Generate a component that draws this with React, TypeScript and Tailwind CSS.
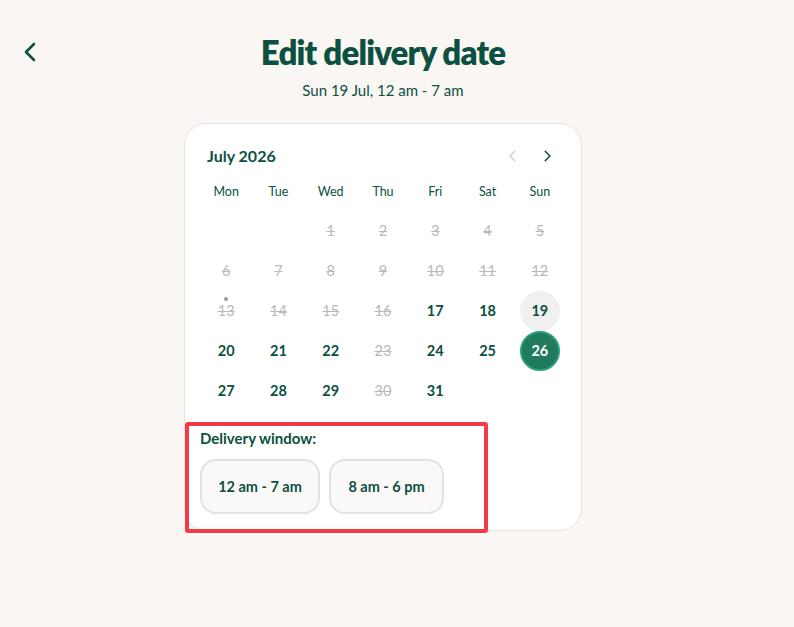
import React from "react";

const G = "#0b5040";

type Day = { n: number; off?: boolean; dot?: boolean; today?: boolean; sel?: boolean } | null;

const weeks: Day[][] = [
  [null, null, { n: 1, off: true }, { n: 2, off: true }, { n: 3, off: true }, { n: 4, off: true }, { n: 5, off: true }],
  [{ n: 6, off: true }, { n: 7, off: true }, { n: 8, off: true }, { n: 9, off: true }, { n: 10, off: true }, { n: 11, off: true }, { n: 12, off: true }],
  [{ n: 13, off: true, dot: true }, { n: 14, off: true }, { n: 15, off: true }, { n: 16, off: true }, { n: 17 }, { n: 18 }, { n: 19, today: true }],
  [{ n: 20 }, { n: 21 }, { n: 22 }, { n: 23, off: true }, { n: 24 }, { n: 25 }, { n: 26, sel: true }],
  [{ n: 27 }, { n: 28 }, { n: 29 }, { n: 30, off: true }, { n: 31 }, null, null],
];

function Chevron({ dir, color, size = 14 }: { dir: "l" | "r"; color: string; size?: number }) {
  return (
    <svg width={size} height={size} viewBox="0 0 24 24" fill="none" stroke={color} strokeWidth={2.6} strokeLinecap="round" strokeLinejoin="round">
      {dir === "l" ? <path d="M15 4 L7 12 L15 20" /> : <path d="M9 4 L17 12 L9 20" />}
    </svg>
  );
}

export default function App() {
  return (
    <div className="min-h-[627px] w-[794px] bg-[#f9f6f3] text-[#0b5040]" style={{ fontFamily: "Lato, 'Noto Sans', sans-serif" }}>
      <div className="relative w-[766px] pt-[31px]">
        <div className="absolute left-[19px] top-[40px]">
          <Chevron dir="l" color={G} size={24} />
        </div>
        <h1 className="text-center text-[33px] font-extrabold leading-[42px] tracking-[-0.8px] text-[#0b5040]">Edit delivery date</h1>
        <p className="mt-[7px] text-center text-[15px] leading-[20px] text-[#0b5040]">Sun 19 Jul, 12 am - 7 am</p>
        <div className="relative mx-auto mt-[23px] w-[398px] rounded-[22px] border border-[#e6e3e0] bg-white px-[15px] pb-[16px] pt-[17px]">
          <div className="flex h-[30px] items-center justify-between pl-[7px] pr-[12px]">
            <span className="text-[16px] font-bold">July 2026</span>
            <div className="flex items-center gap-[20px]">
              <Chevron dir="l" color="#cfd3d1" size={14} />
              <Chevron dir="r" color={G} size={14} />
            </div>
          </div>
          <div className="mt-[9px] grid grid-cols-7">
            {["Mon", "Tue", "Wed", "Thu", "Fri", "Sat", "Sun"].map((d) => (
              <div key={d} className="flex h-[24px] items-center justify-center text-[12.5px]">{d}</div>
            ))}
          </div>
          <div className="mt-[7px] grid grid-cols-7">
            {weeks.flat().map((d, i) => (
              <div key={i} className="flex h-[40px] items-center justify-center">
                {d && (
                  <div
                    className={
                      "relative flex h-[40px] w-[40px] items-center justify-center rounded-full text-[14.5px] " +
                      (d.sel
                        ? "border-2 border-[#2aa07c] bg-[#1f7a5e] font-bold text-white"
                        : d.today
                        ? "bg-[#f1f0ef] font-bold"
                        : d.off
                        ? "text-[#b9b9b9] line-through decoration-[1.2px]"
                        : "font-bold")
                    }
                  >
                    {d.n}
                    {d.dot && <span className="absolute left-[18px] top-[6px] h-[4px] w-[4px] rounded-full bg-[#9a9a9a]" />}
                  </div>
                )}
              </div>
            ))}
          </div>
          <div className="mt-[17px]">
            <div className="text-[15px] font-bold leading-[20px]">Delivery window:</div>
            <div className="mt-[11px] flex gap-[9px]">
              <button className="h-[55px] w-[120px] rounded-[16px] border-2 border-[#e4e2df] bg-[#faf9f7] text-[14.5px] font-bold text-[#0b5040]">12 am - 7 am</button>
              <button className="h-[55px] w-[115px] rounded-[16px] border-2 border-[#e4e2df] bg-[#faf9f7] text-[14.5px] font-bold text-[#0b5040]">8 am - 6 pm</button>
            </div>
          </div>
          <div className="pointer-events-none absolute left-0 top-[298px] h-[111px] w-[303px] rounded-[3px] border-[4px] border-[#f23a48]" />
        </div>
      </div>
    </div>
  );
}
